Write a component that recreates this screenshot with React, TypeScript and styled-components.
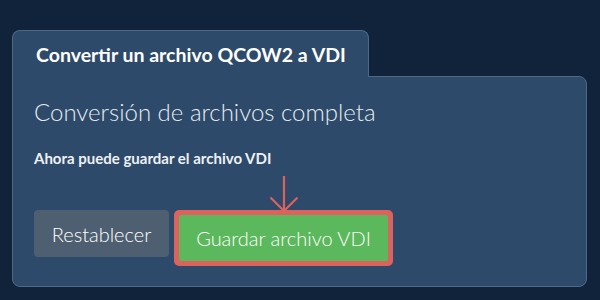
import React from "react";
import styled, { createGlobalStyle } from "styled-components";

const Global = createGlobalStyle`
  html, body { margin: 0; padding: 0; background: #11233a; }
  body { font-family: Lato, "Open Sans", sans-serif; }
  * { box-sizing: border-box; }
`;

const Page = styled.div`
  width: 600px;
  height: 300px;
  padding: 30px 13px 0 12px;
  background: #11233a;
`;

const Tab = styled.div`
  position: relative;
  z-index: 1;
  display: inline-flex;
  align-items: flex-start;
  height: 47px;
  margin-bottom: -1px;
  padding: 12px 22px 0 23px;
  background: #2d4a6a;
  border: 1px solid #4f6888;
  border-bottom: none;
  border-radius: 8px 8px 0 0;
  color: #ffffff;
  font-size: 19.5px;
  font-weight: 700;
  line-height: 24px;
  white-space: nowrap;
`;

const Panel = styled.div`
  height: 211px;
  padding: 20px 21px 0 21px;
  background: #2d4a6a;
  border: 1px solid #4f6888;
  border-radius: 0 8px 8px 8px;
`;

const Heading = styled.h2`
  margin: 0;
  color: #e6ebf0;
  font-size: 24px;
  font-weight: 300;
  line-height: 29px;
`;

const Message = styled.p`
  margin: 23px 0 0 0;
  color: #eef1f4;
  font-size: 15px;
  font-weight: 700;
  line-height: 18px;
`;

const Actions = styled.div`
  display: flex;
  align-items: flex-start;
  gap: 5px;
  margin-top: 43px;
`;

const Button = styled.button<{ $variant: "reset" | "success" }>`
  display: flex;
  align-items: center;
  justify-content: center;
  height: ${(p) => (p.$variant === "reset" ? "47px" : "46px")};
  width: ${(p) => (p.$variant === "reset" ? "135px" : "209px")};
  padding: 0;
  border: none;
  border-radius: ${(p) => (p.$variant === "reset" ? "4px" : "2px")};
  background: ${(p) => (p.$variant === "reset" ? "#4e5f71" : "#5cb85c")};
  color: #ffffff;
  font-family: Lato, "Open Sans", sans-serif;
  font-size: 20px;
  font-weight: 300;
  line-height: 24px;
  cursor: pointer;
`;

const Highlight = styled.div`
  position: relative;
  border: 5px solid #dc625d;
  border-radius: 5px;
  background: #dc625d;
`;

const Pointer = styled.svg`
  position: absolute;
  left: 50%;
  bottom: 100%;
  margin-left: -15px;
  margin-bottom: 2px;
`;

export default function App() {
  return (
    <>
      <Global />
      <Page>
        <Tab>Convertir un archivo QCOW2 a VDI</Tab>
        <Panel>
          <Heading>Conversión de archivos completa</Heading>
          <Message>Ahora puede guardar el archivo VDI</Message>
          <Actions>
            <Button $variant="reset">Restablecer</Button>
            <Highlight>
              <Pointer width="30" height="37" viewBox="0 0 30 37" fill="none">
                <path d="M15 0 V35 M1.5 21.5 L15 35 L28.5 21.5" stroke="#dc625d" strokeWidth="2.2" />
              </Pointer>
              <Button $variant="success">Guardar archivo VDI</Button>
            </Highlight>
          </Actions>
        </Panel>
      </Page>
    </>
  );
}
